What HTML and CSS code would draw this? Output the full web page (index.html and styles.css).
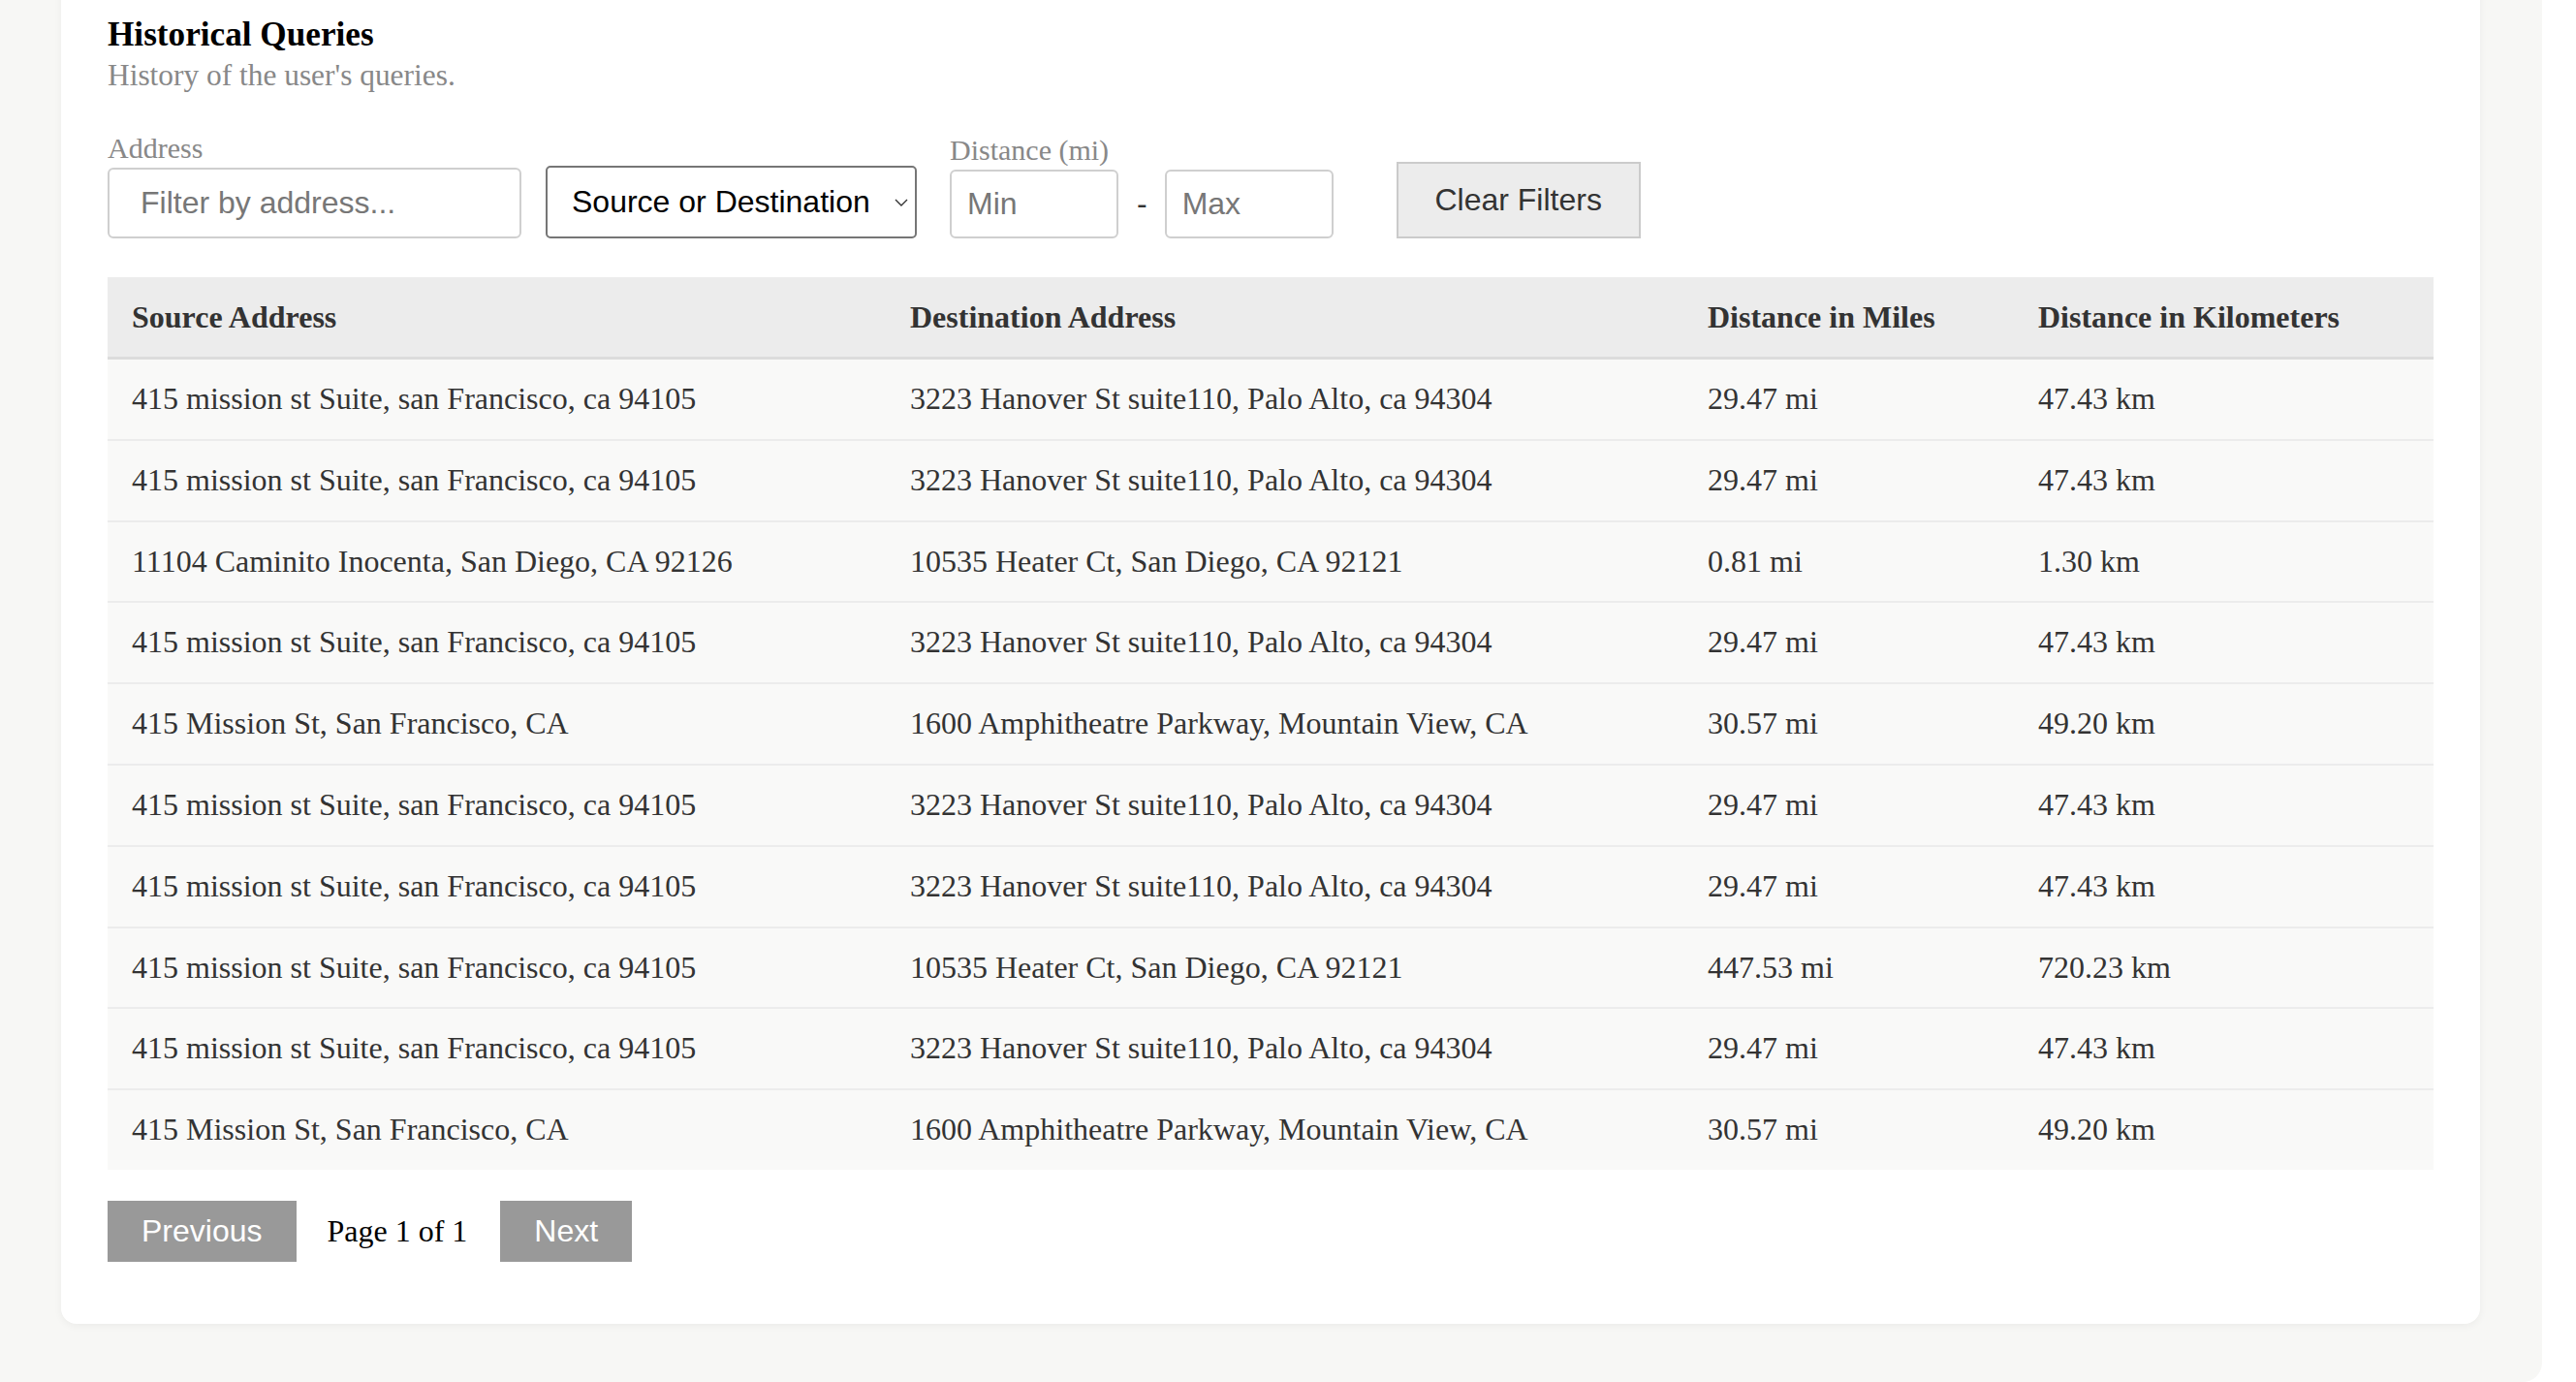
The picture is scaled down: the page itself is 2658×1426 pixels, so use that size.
FILE: index.html
```html
<!DOCTYPE html>
<html lang="en">
<head>
<meta charset="utf-8">
<title>Historical Queries</title>
<link rel="stylesheet" href="styles.css">
</head>
<body>
<div class="page">
  <section class="card">
    <h2 class="title">Historical Queries</h2>
    <p class="subtitle">History of the user's queries.</p>

    <div class="filters">
      <div class="field field-address">
        <label class="field-label">Address</label>
        <input class="input input-address" type="text" placeholder="Filter by address...">
      </div>
      <div class="select-wrap">
        <select class="select">
          <option>Source or Destination</option>
          <option>Source</option>
          <option>Destination</option>
        </select>
        <svg class="chevron" width="14" height="8" viewBox="0 0 14 8" aria-hidden="true"><path d="M1 1 L7 7 L13 1" fill="none" stroke="#333" stroke-width="1.4"/></svg>
      </div>
      <div class="field field-distance">
        <label class="field-label">Distance (mi)</label>
        <div class="range">
          <input class="input input-num" type="text" placeholder="Min">
          <span class="dash">-</span>
          <input class="input input-num" type="text" placeholder="Max">
        </div>
      </div>
      <button class="btn-clear" type="button">Clear Filters</button>
    </div>

    <table class="table">
      <colgroup>
        <col class="col-src">
        <col class="col-dst">
        <col class="col-mi">
        <col class="col-km">
      </colgroup>
      <thead>
        <tr><th>Source Address</th><th>Destination Address</th><th>Distance in Miles</th><th>Distance in Kilometers</th></tr>
      </thead>
      <tbody>
        <tr><td>415 mission st Suite, san Francisco, ca 94105</td><td>3223 Hanover St suite110, Palo Alto, ca 94304</td><td>29.47 mi</td><td>47.43 km</td></tr>
        <tr><td>415 mission st Suite, san Francisco, ca 94105</td><td>3223 Hanover St suite110, Palo Alto, ca 94304</td><td>29.47 mi</td><td>47.43 km</td></tr>
        <tr><td>11104 Caminito Inocenta, San Diego, CA 92126</td><td>10535 Heater Ct, San Diego, CA 92121</td><td>0.81 mi</td><td>1.30 km</td></tr>
        <tr><td>415 mission st Suite, san Francisco, ca 94105</td><td>3223 Hanover St suite110, Palo Alto, ca 94304</td><td>29.47 mi</td><td>47.43 km</td></tr>
        <tr><td>415 Mission St, San Francisco, CA</td><td>1600 Amphitheatre Parkway, Mountain View, CA</td><td>30.57 mi</td><td>49.20 km</td></tr>
        <tr><td>415 mission st Suite, san Francisco, ca 94105</td><td>3223 Hanover St suite110, Palo Alto, ca 94304</td><td>29.47 mi</td><td>47.43 km</td></tr>
        <tr><td>415 mission st Suite, san Francisco, ca 94105</td><td>3223 Hanover St suite110, Palo Alto, ca 94304</td><td>29.47 mi</td><td>47.43 km</td></tr>
        <tr><td>415 mission st Suite, san Francisco, ca 94105</td><td>10535 Heater Ct, San Diego, CA 92121</td><td>447.53 mi</td><td>720.23 km</td></tr>
        <tr><td>415 mission st Suite, san Francisco, ca 94105</td><td>3223 Hanover St suite110, Palo Alto, ca 94304</td><td>29.47 mi</td><td>47.43 km</td></tr>
        <tr><td>415 Mission St, San Francisco, CA</td><td>1600 Amphitheatre Parkway, Mountain View, CA</td><td>30.57 mi</td><td>49.20 km</td></tr>
      </tbody>
    </table>

    <div class="pager">
      <button class="btn-page" type="button">Previous</button>
      <span class="page-info">Page 1 of 1</span>
      <button class="btn-page" type="button">Next</button>
    </div>
  </section>
</div>
</body>
</html>
```
FILE: styles.css
```css
html, body {
  margin: 0;
  padding: 0;
  background: #ffffff;
}

body {
  font-family: "Liberation Serif", "Times New Roman", serif;
  overflow: hidden;
}

.page {
  width: 2623px;
  box-sizing: border-box;
  background: #f7f7f5;
  padding: 0 64px 60px 63px;
  border-bottom-right-radius: 20px;
  overflow: hidden;
}

.card {
  background: #ffffff;
  border-radius: 16px;
  margin-top: -32px;
  padding: 48px 48px 64px 48px;
  box-shadow: 0 2px 8px rgba(0, 0, 0, 0.05);
}

.title {
  margin: 0;
  font-size: 35.2px;
  line-height: 40px;
  font-weight: bold;
  color: #000;
}

.subtitle {
  margin: 4px 0 0 0;
  font-size: 31.4px;
  line-height: 36px;
  color: #888;
}

.filters {
  display: flex;
  align-items: flex-end;
  margin-top: 40px;
}

.field {
  display: flex;
  flex-direction: column;
}

.field-label {
  font-size: 30px;
  line-height: 34px;
  color: #888;
  margin-bottom: 3px;
}

.input {
  font-family: "Liberation Sans", Arial, sans-serif;
  font-size: 32px;
  line-height: 37px;
  color: #333;
  border: 2px solid #cfcfcf;
  border-radius: 6px;
  background: #fff;
  box-sizing: border-box;
  outline: none;
  margin: 0;
}

.input::placeholder {
  color: #777;
}

.input-address {
  width: 427px;
  height: 73px;
  padding: 16px 20px 16px 32px;
}

.select-wrap {
  position: relative;
  margin-left: 25px;
}

.select {
  appearance: none;
  -webkit-appearance: none;
  display: block;
  width: 383px;
  height: 75px;
  box-sizing: border-box;
  font-family: "Liberation Sans", Arial, sans-serif;
  font-size: 32px;
  line-height: 37px;
  color: #000;
  background: #fff;
  border: 2px solid #767676;
  border-radius: 5px;
  padding: 17px 40px 17px 25px;
  margin: 0;
}

.chevron {
  position: absolute;
  right: 9px;
  top: 34px;
  pointer-events: none;
}

.field-distance {
  margin-left: 34px;
}

.range {
  display: flex;
  align-items: center;
}

.input-num {
  width: 174px;
  height: 71px;
  padding: 15px 14px 15px 16px;
}

.dash {
  font-family: "Liberation Sans", Arial, sans-serif;
  font-size: 32px;
  color: #333;
  margin: 0 18px 0 19px;
}

.btn-clear {
  margin-left: 65px;
  width: 252px;
  height: 79px;
  box-sizing: border-box;
  font-family: "Liberation Sans", Arial, sans-serif;
  font-size: 32px;
  line-height: 37px;
  color: #333;
  background: #ececec;
  border: 2px solid #cbcbcb;
  border-radius: 0;
  padding: 0;
}

.table {
  width: 2400px;
  margin-top: 40px;
  border-collapse: collapse;
  table-layout: fixed;
  font-size: 32px;
  color: #333;
}

.col-src { width: 803px; }
.col-dst { width: 823px; }
.col-mi { width: 341px; }
.col-km { width: 433px; }

.table th {
  text-align: left;
  font-weight: bold;
  background: #ececec;
  line-height: 38px;
  padding: 22px 25px;
  border-bottom: 3px solid #dcdcdc;
  color: #333;
}

.table td {
  background: #f9f9f8;
  line-height: 37.8px;
  padding: 22px 25px;
  border-bottom: 2px solid #ececec;
  white-space: nowrap;
}

.table tbody tr:last-child td {
  border-bottom: none;
}

.pager {
  display: flex;
  align-items: center;
  margin-top: 32px;
}

.btn-page {
  font-family: "Liberation Sans", Arial, sans-serif;
  font-size: 32px;
  line-height: 37px;
  color: #fff;
  background: #999;
  border: none;
  border-radius: 0;
  padding: 13px 35px;
  margin: 0;
}

.page-info {
  font-size: 32px;
  color: #000;
  margin: 0 34px 0 32px;
}
```
